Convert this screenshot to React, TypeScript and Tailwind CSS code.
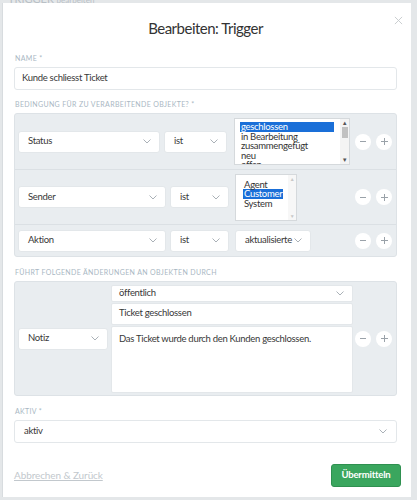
import React from "react";

const font = { fontFamily: "Lato, 'Open Sans', sans-serif" };

function Chevron() {
  return (
    <svg width="8" height="5" viewBox="0 0 8 5" className="shrink-0">
      <path d="M0.5 0.5 L4 4 L7.5 0.5" fill="none" stroke="#a0a8af" strokeWidth="0.9" />
    </svg>
  );
}

function Select({ label, w }: { label: string; w: string }) {
  return (
    <div
      className={`${w} h-[22px] shrink-0 bg-white border border-[#e3e7ea] rounded-[3px] flex items-center justify-between pl-[9px] pr-[8px] text-[9.5px] tracking-[-0.3px] text-[#383838]`}
    >
      <span>{label}</span>
      <Chevron />
    </div>
  );
}

function MinusPlus() {
  return (
    <div className="flex gap-[5px] shrink-0">
      <div className="w-[16px] h-[16px] rounded-full bg-white flex items-center justify-center">
        <div className="w-[6px] h-[1px] bg-[#9aa2a9]" />
      </div>
      <div className="w-[16px] h-[16px] rounded-full bg-white flex items-center justify-center relative">
        <div className="w-[7px] h-[1px] bg-[#9aa2a9]" />
        <div className="absolute w-[1px] h-[7px] bg-[#9aa2a9]" />
      </div>
    </div>
  );
}

function Label({ children }: { children: React.ReactNode }) {
  return (
    <div className="text-[7px] leading-[9px] tracking-[0.35px] uppercase text-[#a9b7c3] mb-[4px] pl-[1px]">
      {children}
    </div>
  );
}

export default function App() {
  return (
    <div className="w-[417px] h-[500px] bg-[#e4e7e9] overflow-hidden relative" style={font}>
      <div className="h-[3px] overflow-hidden pl-[8px] text-[11px] text-[#b9c0c6] leading-none">
        <div className="-mt-[7px]">TRIGGER <span className="text-[8px]">bearbeiten</span></div>
      </div>
      <div className="ml-[2px] w-[409px] h-[494px] bg-white border-l border-[#d8dcdf] pl-[11px] pr-[14px] flex flex-col">
        {/* Header */}
        <div className="relative h-[51px] shrink-0 flex items-center justify-center pb-[1px]">
          <h1 className="text-[15px] tracking-[-0.5px] text-[#333]">Bearbeiten: Trigger</h1>
          <div className="absolute right-[-6px] top-[13px]">
            <svg width="9" height="9" viewBox="0 0 10 10">
              <path d="M1 1 L9 9 M9 1 L1 9" stroke="#c5c9cc" strokeWidth="1" />
            </svg>
          </div>
        </div>

        <Label>Name *</Label>
        <div className="h-[23px] shrink-0 border border-[#e3e7ea] rounded-[3px] flex items-center pl-[7px] text-[9.5px] tracking-[-0.3px] text-[#383838]">
          Kunde schliesst Ticket
        </div>

        <div className="h-[10px] shrink-0" />
        <Label>Bedingung für zu verarbeitende Objekte? *</Label>
        <div className="shrink-0 bg-[#e9edf0] border border-[#dde2e6] rounded-[3px] flex flex-col">
          {/* Row 1 */}
          <div className="h-[56px] flex items-center pl-[3px] pr-[4px] border-b border-[#dbe0e4]">
            <Select label="Status" w="w-[142px]" />
            <div className="w-[4px]" />
            <Select label="ist" w="w-[63px]" />
            <div className="w-[7px]" />
            <div className="w-[116px] h-[47px] bg-white border border-[#d5d9dc] flex text-[9.5px] tracking-[-0.3px] text-[#333] leading-[9.6px] overflow-hidden">
              <div className="flex-1 pl-[5px] pt-[3px] overflow-hidden whitespace-nowrap">
                <div className="bg-[#1a6fd8] text-white pl-[1px] w-[94px]">geschlossen</div>
                <div className="pl-[1px]">in Bearbeitung</div>
                <div className="pl-[1px]">zusammengefügt</div>
                <div className="pl-[1px]">neu</div>
                <div className="pl-[1px]">offen</div>
              </div>
              <div className="w-[9px] flex flex-col items-center bg-[#f4f4f4]">
                <div className="text-[6px] leading-[8px] text-[#555]">▲</div>
                <div className="w-[6px] h-[11px] bg-[#c1c1c1]" />
                <div className="flex-1" />
                <div className="text-[6px] leading-[8px] text-[#555]">▼</div>
              </div>
            </div>
            <div className="flex-1" />
            <MinusPlus />
          </div>
          {/* Row 2 */}
          <div className="h-[55px] flex items-center pl-[3px] pr-[4px] border-b border-[#dbe0e4]">
            <Select label="Sender" w="w-[148px]" />
            <div className="w-[4px]" />
            <Select label="ist" w="w-[59px]" />
            <div className="w-[6px]" />
            <div className="w-[62px] h-[47px] bg-white border border-[#d5d9dc] flex text-[9.5px] tracking-[-0.3px] text-[#333] leading-[9.6px]">
              <div className="flex-1 pl-[7px] pt-[5px] whitespace-nowrap">
                <div className="pl-[1px]">Agent</div>
                <div className="bg-[#1a6fd8] text-white pl-[1px] pr-[1px] w-fit">Customer</div>
                <div className="pl-[1px]">System</div>
              </div>
              <div className="w-[8px] flex flex-col items-center bg-[#f7f7f7]">
                <div className="text-[5px] leading-[8px] text-[#c8c8c8]">▲</div>
                <div className="flex-1" />
                <div className="text-[5px] leading-[8px] text-[#c8c8c8]">▼</div>
              </div>
            </div>
            <div className="flex-1" />
            <MinusPlus />
          </div>
          {/* Row 3 */}
          <div className="h-[31px] flex items-center pl-[3px] pr-[4px]">
            <Select label="Aktion" w="w-[148px]" />
            <div className="w-[4px]" />
            <Select label="ist" w="w-[59px]" />
            <div className="w-[6px]" />
            <Select label="aktualisierte" w="w-[76px]" />
            <div className="flex-1" />
            <MinusPlus />
          </div>
        </div>

        <div className="h-[11px] shrink-0" />
        <Label>Führt folgende Änderungen an Objekten durch</Label>
        <div className="h-[115px] shrink-0 bg-[#e9edf0] border border-[#dde2e6] rounded-[3px] flex items-center pl-[3px] pr-[4px]">
          <Select label="Notiz" w="w-[90px]" />
          <div className="w-[3px]" />
          <div className="w-[242px] flex flex-col gap-[1px]">
            <div className="h-[17px] bg-white border border-[#e3e7ea] rounded-[2px] flex items-center justify-between pl-[7px] pr-[8px] text-[9.5px] tracking-[-0.3px] text-[#383838]">
              <span>öffentlich</span>
              <Chevron />
            </div>
            <div className="h-[22px] bg-white border border-[#e3e7ea] rounded-[2px] flex items-center pl-[7px] text-[9.5px] tracking-[-0.3px] text-[#383838]">
              Ticket geschlossen
            </div>
            <div className="h-[67px] bg-white border border-[#e3e7ea] rounded-[2px] pl-[7px] pt-[5px] text-[9.5px] tracking-[-0.3px] text-[#383838]">
              Das Ticket wurde durch den Kunden geschlossen.
            </div>
          </div>
          <div className="flex-1" />
          <MinusPlus />
        </div>

        <div className="h-[11px] shrink-0" />
        <Label>Aktiv *</Label>
        <div className="h-[23px] shrink-0 border border-[#e3e7ea] rounded-[3px] flex items-center justify-between pl-[9px] pr-[9px] text-[9.5px] tracking-[-0.3px] text-[#383838]">
          <span>aktiv</span>
          <Chevron />
        </div>

        {/* Footer */}
        <div className="mt-[21px] flex items-center justify-between mr-[-4px]">
          <a className="text-[10px] tracking-[-0.1px] text-[#c2c8cd] underline">Abbrechen &amp; Zurück</a>
          <button className="w-[70px] h-[23px] bg-[#3aa65e] border border-[#2f9050] rounded-[3px] text-white text-[9.5px] tracking-[-0.2px] font-bold">
            Übermitteln
          </button>
        </div>
      </div>
    </div>
  );
}
